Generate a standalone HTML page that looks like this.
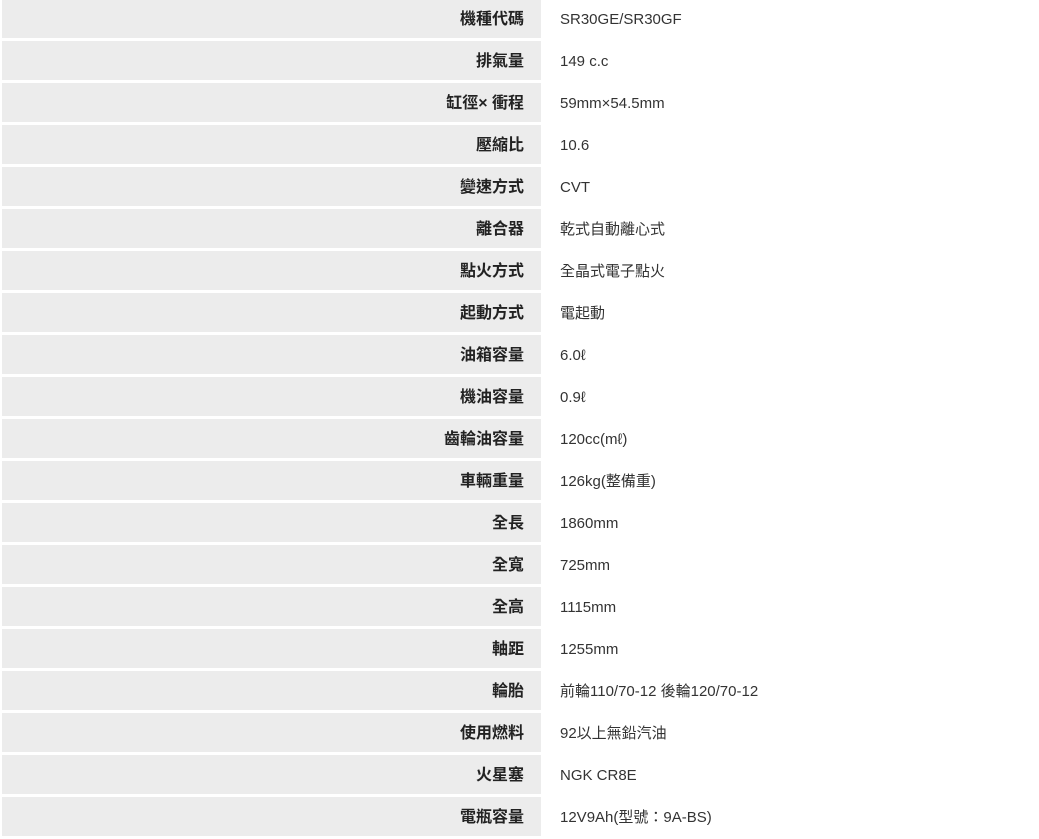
<!DOCTYPE html>
<html><head><meta charset="utf-8"><style>
body{margin:0;width:1039px;height:839px;background:#fff;overflow:hidden;position:relative;font-family:"Liberation Sans","Noto Sans CJK TC",sans-serif;}
.r{position:absolute;left:0;width:1039px;height:39px;}
.l{position:absolute;left:2px;width:539px;height:39px;background:#ececec;}
.l span{position:absolute;right:17px;top:1px;line-height:39px;font-weight:bold;font-size:16px;color:#222;}
.v{position:absolute;left:560px;top:1px;line-height:39px;font-size:15px;color:#333;}
</style></head><body>
<div class="r" style="top:-1px"><div class="l"><span>機種代碼</span></div><div class="v">SR30GE/SR30GF</div></div>
<div class="r" style="top:41px"><div class="l"><span>排氣量</span></div><div class="v">149 c.c</div></div>
<div class="r" style="top:83px"><div class="l"><span>缸徑× 衝程</span></div><div class="v">59mm×54.5mm</div></div>
<div class="r" style="top:125px"><div class="l"><span>壓縮比</span></div><div class="v">10.6</div></div>
<div class="r" style="top:167px"><div class="l"><span>變速方式</span></div><div class="v">CVT</div></div>
<div class="r" style="top:209px"><div class="l"><span>離合器</span></div><div class="v">乾式自動離心式</div></div>
<div class="r" style="top:251px"><div class="l"><span>點火方式</span></div><div class="v">全晶式電子點火</div></div>
<div class="r" style="top:293px"><div class="l"><span>起動方式</span></div><div class="v">電起動</div></div>
<div class="r" style="top:335px"><div class="l"><span>油箱容量</span></div><div class="v">6.0ℓ</div></div>
<div class="r" style="top:377px"><div class="l"><span>機油容量</span></div><div class="v">0.9ℓ</div></div>
<div class="r" style="top:419px"><div class="l"><span>齒輪油容量</span></div><div class="v">120cc(mℓ)</div></div>
<div class="r" style="top:461px"><div class="l"><span>車輛重量</span></div><div class="v">126kg(整備重)</div></div>
<div class="r" style="top:503px"><div class="l"><span>全長</span></div><div class="v">1860mm</div></div>
<div class="r" style="top:545px"><div class="l"><span>全寬</span></div><div class="v">725mm</div></div>
<div class="r" style="top:587px"><div class="l"><span>全高</span></div><div class="v">1115mm</div></div>
<div class="r" style="top:629px"><div class="l"><span>軸距</span></div><div class="v">1255mm</div></div>
<div class="r" style="top:671px"><div class="l"><span>輪胎</span></div><div class="v">前輪110/70-12 後輪120/70-12</div></div>
<div class="r" style="top:713px"><div class="l"><span>使用燃料</span></div><div class="v">92以上無鉛汽油</div></div>
<div class="r" style="top:755px"><div class="l"><span>火星塞</span></div><div class="v">NGK CR8E</div></div>
<div class="r" style="top:797px"><div class="l"><span>電瓶容量</span></div><div class="v">12V9Ah(型號：9A-BS)</div></div>
</body></html>
